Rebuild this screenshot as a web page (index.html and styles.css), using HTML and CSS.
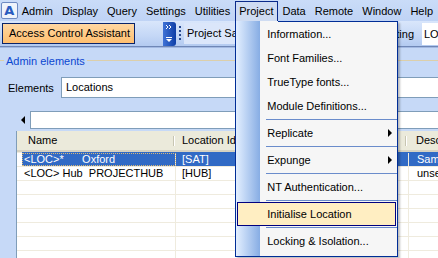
FILE: index.html
```html
<!DOCTYPE html>
<html lang="en">
<head>
    <meta charset="UTF-8">
    <title>Admin elements</title>
    <link rel="stylesheet" href="styles.css">
</head>
<body>

<!-- Barra dei menu -->
<div class="menubar">
    <span class="app-icon">A</span>
    <span class="menu-item">Admin</span>
    <span class="menu-item">Display</span>
    <span class="menu-item">Query</span>
    <span class="menu-item">Settings</span>
    <span class="menu-item">Utilities</span>
    <span class="menu-item open">Project
        <div class="dropdown">
            <div class="dd-item">Information...</div>
            <div class="dd-item">Font Families...</div>
            <div class="dd-item">TrueType fonts...</div>
            <div class="dd-item">Module Definitions...</div>
            <div class="dd-sep"></div>
            <div class="dd-item sub">Replicate</div>
            <div class="dd-sep"></div>
            <div class="dd-item sub">Expunge</div>
            <div class="dd-sep"></div>
            <div class="dd-item">NT Authentication...</div>
            <div class="dd-sep"></div>
            <div class="dd-item hot">Initialise Location</div>
            <div class="dd-sep"></div>
            <div class="dd-item">Locking &amp; Isolation...</div>
        </div>
    </span>
    <span class="menu-item">Data</span>
    <span class="menu-item">Remote</span>
    <span class="menu-item">Window</span>
    <span class="menu-item">Help</span>
</div>

<!-- Barra strumenti -->
<div class="toolbar">
    <div class="assistant-btn">Access Control Assistant</div>
    <div class="chevron">
        <svg width="13" height="24" viewBox="0 0 13 24">
            <polyline points="3,3 5,5 3,7" fill="none" stroke="#fff" stroke-width="1"/>
            <polyline points="6,3 8,5 6,7" fill="none" stroke="#fff" stroke-width="1"/>
            <line x1="3" y1="15.5" x2="9" y2="15.5" stroke="#fff"/>
            <polygon points="3,17 9,17 6,20" fill="#fff"/>
        </svg>
    </div>
    <div class="grip"></div>
    <div class="tool-field">Project Saving</div>
    <div class="tool-label">Location Setting</div>
    <div class="tool-input">LOC</div>
</div>

<!-- Pannello elementi -->
<div class="panel">
    <div class="group-title">Admin elements</div>

    <div class="field-row">
        <span class="field-label">Elements</span>
        <div class="field-box">Locations</div>
    </div>

    <div class="filter-row">
        <span class="arrow-left"></span>
        <div class="filter-box"></div>
    </div>

    <div class="grid">
        <div class="grid-head">
            <div class="col-name">Name</div>
            <div class="col-loc">Location Id</div>
            <div class="col-desc">Description</div>
        </div>
        <div class="grid-row selected">
            <div class="col-name">&lt;LOC&gt;*      Oxford</div>
            <div class="col-loc">[SAT]</div>
            <div class="col-desc">Sample site</div>
        </div>
        <div class="grid-row">
            <div class="col-name">&lt;LOC&gt; Hub  PROJECTHUB</div>
            <div class="col-loc">[HUB]</div>
            <div class="col-desc">unset</div>
        </div>
        <div class="grid-row"><div class="col-name"></div><div class="col-loc"></div><div class="col-desc"></div></div>
        <div class="grid-row"><div class="col-name"></div><div class="col-loc"></div><div class="col-desc"></div></div>
        <div class="grid-row"><div class="col-name"></div><div class="col-loc"></div><div class="col-desc"></div></div>
        <div class="grid-row"><div class="col-name"></div><div class="col-loc"></div><div class="col-desc"></div></div>
        <div class="grid-row"><div class="col-name"></div><div class="col-loc"></div><div class="col-desc"></div></div>
        <div class="grid-row"><div class="col-name"></div><div class="col-loc"></div><div class="col-desc"></div></div>
    </div>
</div>

</body>
</html>
```

FILE: styles.css
```css
/* Impostazioni generali */
body {
    margin: 0;
    width: 438px;
    height: 258px;
    overflow: hidden;
    font-family: "Liberation Sans", Arial, sans-serif;
    font-size: 11px;
    color: #000;
    background-color: #c6d9f7;
}

/* Barra dei menu */
.menubar {
    display: flex;
    align-items: flex-start;
    height: 21px;
    background: linear-gradient(#cadcf8, #bfd3f5);
}

.app-icon {
    width: 16px;
    height: 15px;
    margin: 2px 0 0 1px;
    border: 1px solid #6d8ac2;
    border-radius: 2px;
    background-color: #eef3fb;
    color: #2a5cbf;
    font-family: "DejaVu Sans", sans-serif;
    font-weight: bold;
    font-size: 13px;
    line-height: 15px;
    text-align: center;
}

.menu-item {
    position: relative;
    box-sizing: border-box;
    height: 20px;
    margin-top: 1px;
    padding: 0 4px 0 3px;
    border: 1px solid transparent;
    border-bottom: none;
    line-height: 19px;
    white-space: nowrap;
}

.menu-item.open {
    border-color: #0a2a8a;
    background-color: #cfdcf2;
}

/* Menu a tendina */
.dropdown {
    position: absolute;
    top: 19px;
    left: -1px;
    z-index: 5;
    width: 161px;
    padding-bottom: 3px;
    border: 1px solid #002d96;
    background: linear-gradient(to right, #e3efff, #87ade4) 0 0 / 24px 100% no-repeat, #f6f6f6;
    box-shadow: 2px 2px 2px rgba(0, 0, 0, 0.25);
}

.dropdown::before {
    content: '';
    position: absolute;
    top: -1px;
    left: 0;
    width: 42px;
    height: 1px;
    background: linear-gradient(to right, #e3efff, #87ade4 24px, #f6f6f6 24px);
}

.dd-item {
    position: relative;
    height: 24px;
    padding-left: 31px;
    line-height: 24px;
    white-space: nowrap;
}

.dd-item.hot {
    height: 22px;
    margin: 0 1px;
    padding-left: 29px;
    border: 1px solid #000080;
    background-color: #ffeec2;
    line-height: 22px;
}

.dd-item.sub::after {
    content: '';
    position: absolute;
    top: 8px;
    right: 5px;
    border-left: 4px solid #000;
    border-top: 4px solid transparent;
    border-bottom: 4px solid transparent;
}

.dd-sep {
    height: 1px;
    margin: 1px 0 1px 30px;
    background-color: #6a8ccb;
}

/* Barra strumenti */
.toolbar {
    display: flex;
    align-items: center;
    height: 25px;
    background: linear-gradient(#d9e6fb, #c4d7f6 60%, #b3caf0);
    border-bottom: 1px solid #6f87b6;
    white-space: nowrap;
}

.assistant-btn {
    box-sizing: border-box;
    width: 133px;
    height: 21px;
    margin-left: 2px;
    padding-left: 6px;
    border: 1px solid #0a246a;
    background: linear-gradient(#ffd7a2, #ffbf70);
    line-height: 19px;
}

.chevron {
    align-self: flex-end;
    width: 13px;
    height: 24px;
    margin-left: 28px;
    border-radius: 0 3px 3px 0;
    background: linear-gradient(to right, #3f72d6, #0e3ea6);
}

.chevron svg {
    display: block;
}

.grip {
    width: 2px;
    height: 16px;
    margin-left: 3px;
    background: repeating-linear-gradient(#27498f 0 2px, transparent 2px 4px);
}

.tool-field {
    box-sizing: border-box;
    width: 53px;
    height: 21px;
    margin-left: 3px;
    padding-left: 3px;
    overflow: hidden;
    background-color: #dbe6fa;
    line-height: 21px;
}

.tool-label {
    flex: 1;
    padding-right: 8px;
    text-align: right;
}

.tool-input {
    box-sizing: border-box;
    width: 16px;
    height: 22px;
    padding-left: 2px;
    overflow: hidden;
    background-color: #fff;
    line-height: 22px;
}

/* Pannello elementi */
.panel {
    border-top: 1px solid #a3b9e2;
}

.group-title {
    display: flex;
    align-items: center;
    margin-top: 6px;
    height: 13px;
    color: #0b47d0;
}

.group-title::before,
.group-title::after {
    content: '';
    height: 1px;
    background-color: #dccfaa;
}

.group-title::before {
    width: 4px;
    margin-right: 2px;
}

.group-title::after {
    flex: 1;
    margin-left: 2px;
}

.field-row {
    display: flex;
    align-items: center;
    margin-top: 10px;
}

.field-label {
    width: 53px;
    padding-left: 8px;
}

.field-box {
    box-sizing: border-box;
    flex: 1;
    height: 21px;
    padding-left: 4px;
    border: 1px solid #7f9db9;
    border-right: none;
    background-color: #fff;
    line-height: 19px;
}

.filter-row {
    display: flex;
    align-items: center;
    margin-top: 13px;
}

.arrow-left {
    width: 0;
    margin-left: 21px;
    border-right: 4px solid #000;
    border-top: 4px solid transparent;
    border-bottom: 4px solid transparent;
}

.filter-box {
    box-sizing: border-box;
    flex: 1;
    height: 18px;
    margin-left: 5px;
    border: 1px solid #7f9db9;
    border-right: none;
    background-color: #fff;
}

/* Griglia delle location */
.grid {
    margin: 2px 0 0 16px;
    border-left: 1px solid #7f9db9;
    background-color: #fff;
}

.grid-head {
    display: flex;
    box-sizing: border-box;
    height: 21px;
    background-color: #ebeadb;
    border-bottom: 2px solid #d6d2c2;
    line-height: 19px;
}

.grid-head div,
.grid-row div {
    position: relative;
    flex-shrink: 0;
    white-space: nowrap;
}

.grid-head .col-name {
    width: 146px;
    padding-left: 11px;
}

.grid-head .col-name::after,
.grid-head .col-loc::after {
    content: '';
    position: absolute;
    top: 5px;
    right: 0;
    width: 1px;
    height: 10px;
    background-color: #c7c5b2;
    box-shadow: 1px 0 0 #fff;
}

.grid-head .col-loc {
    width: 224px;
    padding-left: 8px;
}

.grid-head .col-desc {
    padding-left: 10px;
}

.grid-row {
    display: flex;
    height: 13px;
    padding-left: 5px;
    border-top: 1px solid #efebde;
    line-height: 13px;
}

.grid-row div {
    white-space: pre;
}

.grid-row .col-name {
    width: 151px;
    padding-left: 2px;
    border-right: 1px solid #efebde;
}

.grid-row .col-loc {
    width: 226px;
    padding-left: 6px;
    border-right: 1px solid #efebde;
}

.grid-row .col-desc {
    width: 60px;
    padding-left: 8px;
}

.grid-row.selected div {
    background-color: #316ac5;
    color: #fff;
    box-shadow: 0 -1px 0 #316ac5;
}

.grid-row.selected .col-name {
    outline: 1px dotted #d8b878;
    outline-offset: -1px;
}
```
